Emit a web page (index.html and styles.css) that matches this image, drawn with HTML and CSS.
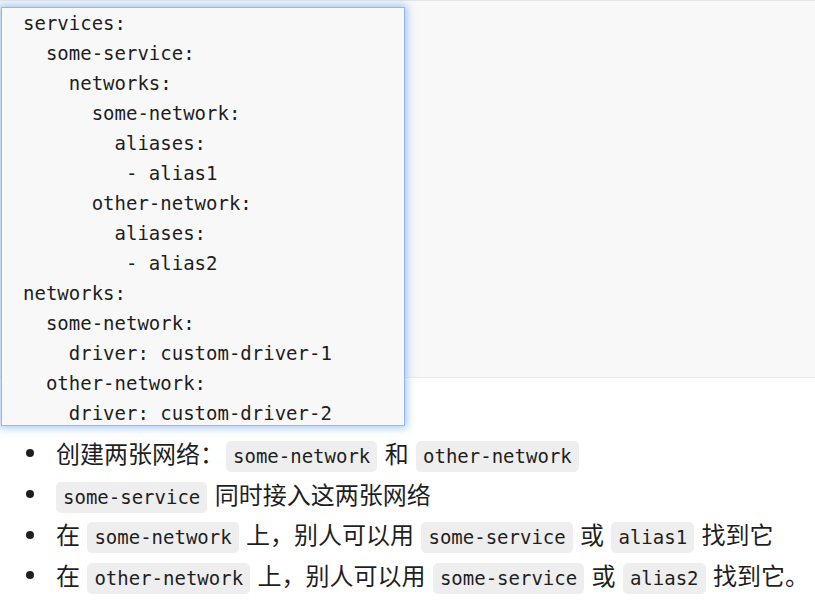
FILE: index.html
```html
<!DOCTYPE html>
<html lang="zh">
<head>
<meta charset="utf-8">
<link rel="stylesheet" href="styles.css">
</head>
<body>
<div class="codeblock">
  <div class="popup">
<pre class="code">services:
  some-service:
    networks:
      some-network:
        aliases:
         - alias1
      other-network:
        aliases:
         - alias2
networks:
  some-network:
    driver: custom-driver-1
  other-network:
    driver: custom-driver-2</pre>
  </div>
</div>
<ul class="list">
  <li><span class="dot"></span><span class="txt">创建两张网络：<code>some-network</code> 和 <code>other-network</code></span></li>
  <li><span class="dot"></span><span class="txt"><code class="first">some-service</code> 同时接入这两张网络</span></li>
  <li><span class="dot"></span><span class="txt">在 <code>some-network</code> 上，别人可以用 <code>some-service</code> 或 <code>alias1</code> 找到它</span></li>
  <li><span class="dot"></span><span class="txt">在 <code>other-network</code> 上，别人可以用 <code>some-service</code> 或 <code>alias2</code> 找到它。</span></li>
</ul>
</body>
</html>
```
FILE: styles.css
```css
html, body {
  margin: 0;
  padding: 0;
  background: #ffffff;
}
body {
  font-family: "Noto Sans CJK SC", "Noto Sans", sans-serif;
  color: #1f1f1f;
  overflow: hidden;
}
.codeblock {
  position: relative;
  height: 376px;
  background: #f8f8f8;
  border-top: 1px solid #e6e6e6;
  border-bottom: 1px solid #ececec;
}
.popup {
  position: absolute;
  left: 2px;
  top: 7px;
  width: 402px;
  height: 417px;
  background: #f8f8f8;
  box-shadow: 0 0 0 1px rgba(130, 180, 250, 0.85), 0 0 8px 3px rgba(110, 165, 245, 0.6);
  z-index: 2;
}
.code {
  margin: 0;
  padding: 0 0 0 21px;
  font-family: "DejaVu Sans Mono", monospace;
  font-size: 19px;
  line-height: 30px;
  color: #1e1e1e;
}
.list {
  list-style: none;
  margin: 55px 0 0 0;
  padding: 0;
}
.list li {
  display: flex;
  align-items: center;
  height: 40.7px;
}
.dot {
  width: 8px;
  height: 8px;
  border-radius: 50%;
  background: #1f1f1f;
  margin-left: 26px;
  margin-right: 22px;
  flex: none;
}
.txt {
  font-size: 24px;
  white-space: nowrap;
}
code {
  display: inline-block;
  font-family: "DejaVu Sans Mono", monospace;
  font-size: 19px;
  line-height: 31px;
  padding: 0 7px;
  margin: 0 2px;
  border-radius: 5px;
  background: #eeeeee;
  color: #1e1e1e;
  vertical-align: middle;
}
code.first {
  margin-left: 0;
}
```
